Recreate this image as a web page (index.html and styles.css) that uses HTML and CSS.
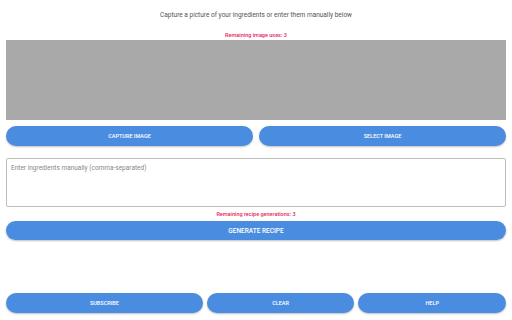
FILE: index.html
```html
<!DOCTYPE html>
<html lang="en">

<head>
    <meta charset="UTF-8">
    <meta name="viewport" content="width=device-width, initial-scale=1.0">
    <title>Recipe Helper</title>
    <link rel="stylesheet" href="styles.css">
</head>

<body>
    <div class="app">
        <p class="intro">Capture a picture of your ingredients or enter them manually below</p>

        <p class="remaining">Remaining image uses: 3</p>
        <!-- Image preview -->
        <div class="preview"></div>

        <div class="button-row">
            <button class="pill-button">Capture Image</button>
            <button class="pill-button">Select Image</button>
        </div>

        <textarea class="ingredients" placeholder="Enter ingredients manually (comma-separated)"></textarea>

        <p class="remaining recipe-count">Remaining recipe generations: 3</p>
        <button class="pill-button generate-button">Generate Recipe</button>

        <!-- Footer -->
        <div class="footer-row">
            <button class="pill-button subscribe">Subscribe</button>
            <button class="pill-button clear">Clear</button>
            <button class="pill-button help">Help</button>
        </div>
    </div>
</body>

</html>
```

FILE: styles.css
```css
body {
    margin: 0;
    font-family: Roboto, "Noto Sans", sans-serif;
    background: #ffffff;
}

.app {
    display: flex;
    flex-direction: column;
    height: 100vh;
    box-sizing: border-box;
    padding: 0 6px 7px 6px;
}

.intro {
    margin: 11px 0 0 0;
    font-size: 6.5px;
    line-height: 9px;
    text-align: center;
    color: #555;
}

.remaining {
    margin: 12px 0 2px 0;
    font-size: 5.5px;
    line-height: 6px;
    font-weight: 500;
    text-align: center;
    color: #e8245a;
}

.preview {
    height: 80px;
    background: #a9a9a9;
}

.button-row {
    display: flex;
    gap: 6px;
    margin-top: 6px;
}

.pill-button {
    flex: 1;
    height: 20px;
    border: none;
    border-radius: 10px;
    background: #4a8de0;
    color: #fff;
    font-family: Roboto, "Noto Sans", sans-serif;
    font-size: 5.5px;
    font-weight: 500;
    text-transform: uppercase;
    box-shadow: 0 1px 2px rgba(0, 0, 0, 0.25);
    cursor: pointer;
    padding: 0;
}

.ingredients {
    margin-top: 12px;
    height: 49px;
    box-sizing: border-box;
    border: 1px solid #bdbdbd;
    border-radius: 2px;
    padding: 5px 4px;
    font-family: Roboto, "Noto Sans", sans-serif;
    font-size: 6.5px;
    resize: none;
}

.ingredients::placeholder {
    color: #888;
}

.recipe-count {
    margin: 4px 0 4px 0;
}

.generate-button {
    flex: none;
    height: 19px;
    font-size: 6.5px;
}

.footer-row {
    display: flex;
    gap: 4px;
    margin-top: auto;
}

.footer-row .subscribe {
    flex: 4;
}

.footer-row .clear,
.footer-row .help {
    flex: 3;
}
```
